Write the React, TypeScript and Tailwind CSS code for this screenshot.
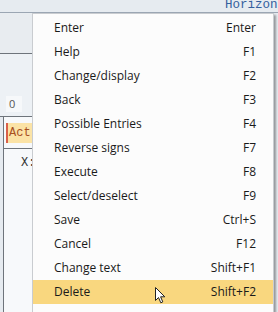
import { useState } from 'react'

const items: [string, string][] = [
  ['Enter', 'Enter'],
  ['Help', 'F1'],
  ['Change/display', 'F2'],
  ['Back', 'F3'],
  ['Possible Entries', 'F4'],
  ['Reverse signs', 'F7'],
  ['Execute', 'F8'],
  ['Select/deselect', 'F9'],
  ['Save', 'Ctrl+S'],
  ['Cancel', 'F12'],
  ['Change text', 'Shift+F1'],
  ['Delete', 'Shift+F2'],
]

function Cursor() {
  return (
    <svg width="11" height="17" viewBox="0 0 11 17" className="absolute left-[122px] top-[7px]">
      <path d="M0.5 0.5 L0.5 13.5 L3.5 10.5 L5.8 15.8 L7.8 14.9 L5.6 9.8 L9.8 9.8 Z"
        fill="#fff" stroke="#222" strokeWidth="1" strokeLinejoin="round" />
    </svg>
  )
}

export default function App() {
  const [active, setActive] = useState(11)

  return (
    <div className="relative w-[278px] h-[312px] overflow-hidden bg-[#e6ebf0]" style={{ fontFamily: '"Open Sans", sans-serif' }}>
      {/* screen behind the menu */}
      <div className="h-[13px] flex items-start border-b border-[#9ba6b3] pl-[225px] overflow-hidden">
        <span className="text-[12.5px] leading-[11px] text-[#34609e] whitespace-nowrap" style={{ fontFamily: '"Liberation Mono", monospace' }}>
          Horizon
        </span>
      </div>
      <div className="w-[32px] overflow-hidden">
        <div className="h-[41px] border-b border-[#6e747b] bg-[#e8ecf0]" />
        <div className="h-[63px] flex items-end pb-[4px] pl-[6px] border-b border-[#6e747b] bg-[#edf1f5]">
          <span className="w-[16px] h-[16px] bg-[#f6f8fa] text-[11px] leading-[16px] text-[#555] pl-[3px]">0</span>
        </div>
        <div className="ml-[3px] border-l border-[#6e747b] h-[200px] bg-[#f7f9fb]">
          <div className="h-[32px] border-b border-[#6e747b] flex items-center pl-[2px]">
            <div className="h-[20px] w-[27px] bg-[#fbe3a6] border-l-2 border-[#d9604a] flex items-center pl-[1px]">
              <span className="text-[12px] text-[#a8501f]" style={{ fontFamily: '"Liberation Mono", monospace' }}>Act</span>
              <span className="w-[2px] h-[14px] bg-[#10125a] ml-[1px]" />
            </div>
          </div>
          <div className="h-[28px] flex items-center pl-[17px]">
            <span className="text-[12px] text-[#333] whitespace-nowrap" style={{ fontFamily: '"Liberation Mono", monospace' }}>X:</span>
          </div>
        </div>
      </div>

      {/* context menu */}
      <div className="absolute left-[32px] top-[13px] w-[242px] h-[310px] bg-[#fcfcfc] border border-[#c9ccd0] pt-[2px] shadow-[2px_2px_2px_rgba(0,0,0,0.35)]">
        {items.map(([label, key], i) => (
          <div
            key={label}
            onMouseEnter={() => setActive(i)}
            className={`relative h-[24px] flex items-center justify-between pl-[21px] pr-[17px] text-[12px] text-[#1a1a1a] ${i === active ? 'bg-[#f9d77f]' : ''}`}
          >
            <span>{label}</span>
            <span>{key}</span>
            {i === 11 && <Cursor />}
          </div>
        ))}
      </div>
    </div>
  )
}
